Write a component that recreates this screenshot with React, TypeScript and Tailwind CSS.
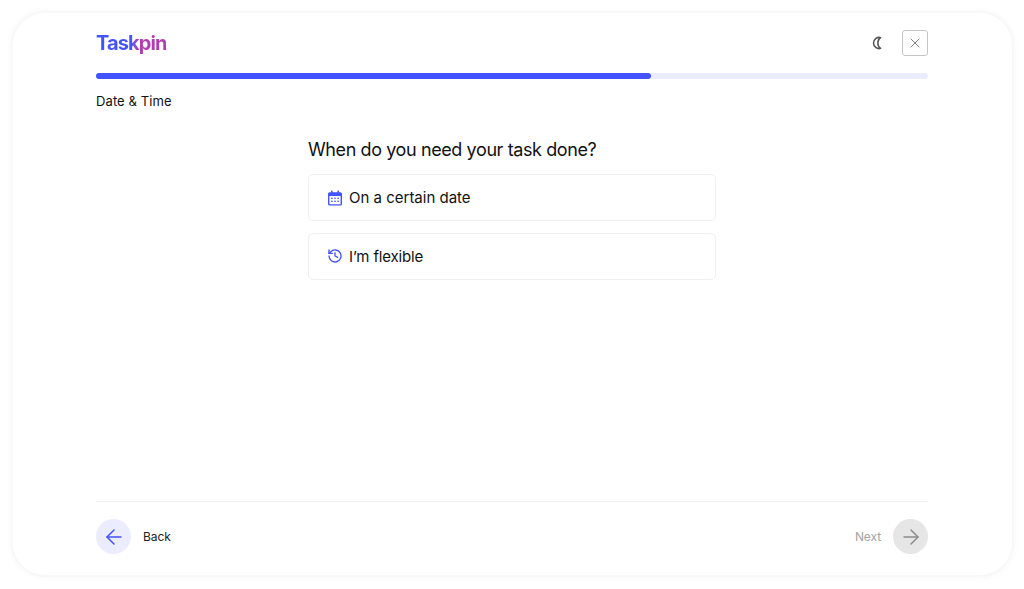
import { ArrowLeft, ArrowRight, X } from "lucide-react"

export default function App() {
  return (
    <div className="h-[589px] w-[1024px] overflow-hidden bg-white pl-[13px] pr-[12px] pt-[13px] font-['Inter',sans-serif]">
      <div className="flex h-[562px] flex-col rounded-[32px] bg-white pl-[83px] pr-[84px] shadow-[0_0_0_2px_#f8f8f9,0_0_6px_2px_#f6f6f7]">
        <div className="flex h-[60px] items-center justify-between">
          <div className="mb-[1px] bg-gradient-to-r from-[#4353ff] from-50% to-[#b13fb0] to-60% bg-clip-text text-[20px] font-bold tracking-[-0.9px] text-transparent">
            Taskpin
          </div>
          <div className="flex items-center gap-[17px]">
            <svg width="14" height="14" viewBox="0 0 14 14" fill="none">
              <path
                d="M9.6 1.6A5.6 5.6 0 1 0 9.6 12.4 6.6 6.6 0 0 1 9.6 1.6Z"
                stroke="#555"
                strokeWidth="1.5"
                strokeLinejoin="round"
              />
            </svg>
            <div className="flex size-[26px] items-center justify-center rounded-[3px] border border-[#c4c4c4]">
              <X size={16} strokeWidth={1.4} className="text-[#777]" />
            </div>
          </div>
        </div>
        <div className="h-[6px] rounded-full bg-[#ebedff]">
          <div className="h-[6px] w-[555px] rounded-full bg-[#4353ff]" />
        </div>
        <div className="mt-[13px] text-[13px] leading-[18px] font-normal tracking-[0.1px] text-[#111]">Date &amp; Time</div>

        <div className="ml-[212px] mt-[27px] flex w-[408px] flex-1 flex-col">
          <h1 className="text-[18px] leading-[26px] font-normal tracking-[-0.4px] text-[#111]">When do you need your task done?</h1>
          <div className="mt-[11px] flex h-[47px] items-center gap-[6px] rounded-[5px] border border-[#f0f0f2] px-[18px] text-[15px] text-[#111]">
            <svg width="16" height="16" viewBox="0 0 16 16" fill="#4353ff">
              <rect x="1" y="2.2" width="14" height="13.3" rx="1.6" />
              <rect x="4" y="0.5" width="1.6" height="3" rx="0.6" />
              <rect x="10.4" y="0.5" width="1.6" height="3" rx="0.6" />
              <rect x="2.4" y="6" width="11.2" height="8.2" rx="0.5" fill="#fff" />
              <g fill="#4353ff">
                <rect x="4.2" y="7.6" width="1.4" height="1.4" />
                <rect x="7.3" y="7.6" width="1.4" height="1.4" />
                <rect x="10.4" y="7.6" width="1.4" height="1.4" />
                <rect x="4.2" y="10.6" width="1.4" height="1.4" />
                <rect x="7.3" y="10.6" width="1.4" height="1.4" />
                <rect x="10.4" y="10.6" width="1.4" height="1.4" />
              </g>
            </svg>
            <span className="pt-[2px]">On a certain date</span>
          </div>
          <div className="mt-[12px] flex h-[47px] items-center gap-[6px] rounded-[5px] border border-[#f0f0f2] px-[18px] text-[15px] tracking-[-0.15px] text-[#111]">
            <svg width="16" height="16" viewBox="0 0 24 24" fill="none" stroke="#4353ff" strokeWidth="2" strokeLinecap="round" strokeLinejoin="round" className="mb-[1px]">
              <path d="M3 12a9 9 0 1 0 2.6-6.4L3 8" />
              <path d="M3 3v5h5" />
              <path d="M12 7v5l4 2" />
            </svg>
            <span className="pt-[2px]">I’m flexible</span>
          </div>
        </div>

        <div className="flex h-[74px] items-start justify-between border-t border-[#f1f1f3] pt-[17px] text-[12px] tracking-[-0.1px]">
          <div className="flex items-center gap-[12px] text-[#222]">
            <div className="flex size-[35px] items-center justify-center rounded-full bg-[#ebedff]">
              <ArrowLeft size={24} strokeWidth={1.5} className="text-[#4353ff]" />
            </div>
            Back
          </div>
          <div className="flex items-center gap-[12px] text-[#a3a3a3]">
            Next
            <div className="flex size-[35px] items-center justify-center rounded-full bg-[#e6e6e6]">
              <ArrowRight size={24} strokeWidth={1.5} className="text-[#8c8c8c]" />
            </div>
          </div>
        </div>
      </div>
    </div>
  )
}
